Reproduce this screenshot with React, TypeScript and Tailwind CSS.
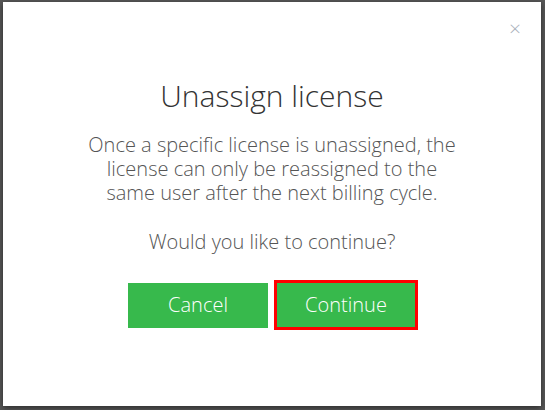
export default function App() {
  return (
    <div className="w-[545px] h-[410px] bg-[#575757] pt-[2px] pl-[3px] pr-[4px] pb-[4px]" style={{ fontFamily: '"Open Sans", sans-serif' }}>
      <div className="relative h-full bg-white shadow-[0_2px_6px_rgba(0,0,0,0.5)] flex flex-col items-center">
        <button className="absolute right-[20px] top-[16px] text-[#a9b0bb] text-[21px] leading-none font-light">×</button>
        <h2 className="mt-[74px] text-[30px] font-light text-[#333] leading-[40px]">Unassign license</h2>
        <p className="mt-[17px] text-[20px] font-light text-[#555] leading-[24px] text-center w-[380px]">
          Once a specific license is unassigned, the license can only be reassigned to the same user after the next billing cycle.
        </p>
        <p className="mt-[25px] text-[20px] font-light text-[#555] leading-[24px]">Would you like to continue?</p>
        <div className="mt-[26px] ml-[2px] flex items-center gap-[6px]">
          <button className="w-[140px] h-[45px] bg-[#37b94c] text-white text-[20px] font-light">Cancel</button>
          <button className="w-[144px] h-[50px] bg-[#37b94c] text-white text-[20px] font-light border-[3px] border-[#f00]">Continue</button>
        </div>
      </div>
    </div>
  )
}
